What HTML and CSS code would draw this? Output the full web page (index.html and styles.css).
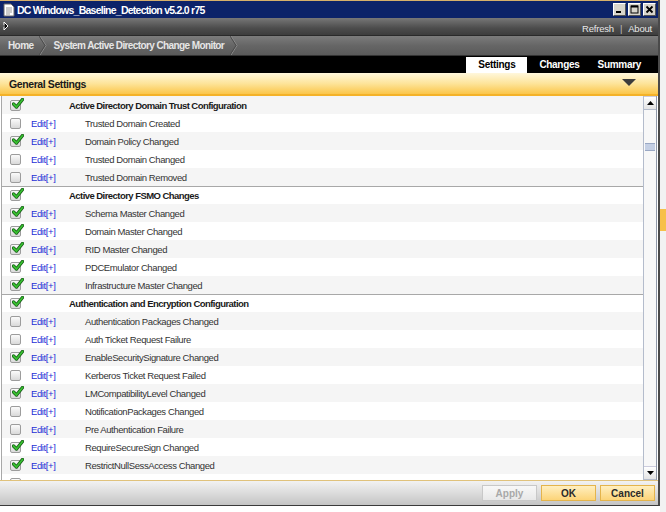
FILE: index.html
```html
<!DOCTYPE html>
<html lang="en">
<head>
    <meta charset="UTF-8">
    <title>DC Windows_Baseline_Detection v5.2.0 r75</title>
    <link rel="stylesheet" href="styles.css">
</head>
<body>
    <div class="screen">
        <div class="window">
            <div class="titlebar">
                <svg class="app-icon" width="12" height="14" viewBox="0 0 12 14">
                    <path d="M1 1 H8 L11 4 V13 H1 Z" fill="#fff" stroke="#666"/>
                    <path d="M3 5 H9 M3 7 H9 M3 9 H9 M3 11 H7" stroke="#999"/>
                </svg>
                <span class="title">DC Windows_Baseline_Detection v5.2.0 r75</span>
                <div class="win-buttons">
                    <span class="win-btn"><svg width="9" height="9"><path d="M1 7 H6" stroke="#000" stroke-width="2"/></svg></span>
                    <span class="win-btn"><svg width="9" height="9"><rect x="1" y="1" width="7" height="7" fill="none" stroke="#000"/><path d="M1 1.5 H8" stroke="#000" stroke-width="2"/></svg></span>
                    <span class="win-btn"><svg width="9" height="9"><path d="M1.5 1.5 L7.5 7.5 M7.5 1.5 L1.5 7.5" stroke="#000" stroke-width="1.8"/></svg></span>
                </div>
            </div>

            <div class="toolbar">
                <svg class="cursor" width="10" height="10" viewBox="0 0 10 10">
                    <path d="M0 5 H5 M4 1 L8 5 L4 9 Z" stroke="#fff" stroke-width="1" fill="#000"/>
                    <path d="M0 5 H5" stroke="#000" stroke-width="1"/>
                </svg>
                <div class="toolbar-links">
                    <a>Refresh</a><span class="sep">|</span><a>About</a>
                </div>
            </div>

            <div class="crumbs">
                <span class="crumb">Home</span>
                <svg class="chev" width="8" height="19" viewBox="0 0 8 19"><path d="M1 0 L7 9.5 L1 19" fill="none" stroke="#8c8c8c"/><path d="M0 0 L6 9.5 L0 19" fill="none" stroke="#4a4a4a"/></svg>
                <span class="crumb">System Active Directory Change Monitor</span>
                <svg class="chev" width="8" height="19" viewBox="0 0 8 19"><path d="M1 0 L7 9.5 L1 19" fill="none" stroke="#8c8c8c"/><path d="M0 0 L6 9.5 L0 19" fill="none" stroke="#4a4a4a"/></svg>
            </div>

            <div class="tabbar">
                <span class="tab active">Settings</span>
                <span class="tab">Changes</span>
                <span class="tab">Summary</span>
            </div>

            <div class="section-head">
                <span>General Settings</span>
                <svg class="collapse" width="14" height="7" viewBox="0 0 14 7"><path d="M0 0 H14 L7 7 Z" fill="#3c3c3c"/></svg>
            </div>

            <div class="content">
                <div class="list">
                    <div class="row group first"><span class="cb on"></span><span class="group-name">Active Directory Domain Trust Configuration</span></div>
                    <div class="row"><span class="cb"></span><a class="edit">Edit[+]</a><span class="label">Trusted Domain Created</span></div>
                    <div class="row"><span class="cb on"></span><a class="edit">Edit[+]</a><span class="label">Domain Policy Changed</span></div>
                    <div class="row"><span class="cb"></span><a class="edit">Edit[+]</a><span class="label">Trusted Domain Changed</span></div>
                    <div class="row"><span class="cb"></span><a class="edit">Edit[+]</a><span class="label">Trusted Domain Removed</span></div>

                    <div class="row group"><span class="cb on"></span><span class="group-name">Active Directory FSMO Changes</span></div>
                    <div class="row"><span class="cb on"></span><a class="edit">Edit[+]</a><span class="label">Schema Master Changed</span></div>
                    <div class="row"><span class="cb on"></span><a class="edit">Edit[+]</a><span class="label">Domain Master Changed</span></div>
                    <div class="row"><span class="cb on"></span><a class="edit">Edit[+]</a><span class="label">RID Master Changed</span></div>
                    <div class="row"><span class="cb on"></span><a class="edit">Edit[+]</a><span class="label">PDCEmulator Changed</span></div>
                    <div class="row"><span class="cb on"></span><a class="edit">Edit[+]</a><span class="label">Infrastructure Master Changed</span></div>

                    <div class="row group"><span class="cb on"></span><span class="group-name">Authentication and Encryption Configuration</span></div>
                    <div class="row"><span class="cb"></span><a class="edit">Edit[+]</a><span class="label">Authentication Packages Changed</span></div>
                    <div class="row"><span class="cb"></span><a class="edit">Edit[+]</a><span class="label">Auth Ticket Request Failure</span></div>
                    <div class="row"><span class="cb on"></span><a class="edit">Edit[+]</a><span class="label">EnableSecuritySignature Changed</span></div>
                    <div class="row"><span class="cb"></span><a class="edit">Edit[+]</a><span class="label">Kerberos Ticket Request Failed</span></div>
                    <div class="row"><span class="cb on"></span><a class="edit">Edit[+]</a><span class="label">LMCompatibilityLevel Changed</span></div>
                    <div class="row"><span class="cb"></span><a class="edit">Edit[+]</a><span class="label">NotificationPackages Changed</span></div>
                    <div class="row"><span class="cb"></span><a class="edit">Edit[+]</a><span class="label">Pre Authentication Failure</span></div>
                    <div class="row"><span class="cb on"></span><a class="edit">Edit[+]</a><span class="label">RequireSecureSign Changed</span></div>
                    <div class="row"><span class="cb on"></span><a class="edit">Edit[+]</a><span class="label">RestrictNullSessAccess Changed</span></div>
                    <div class="row"><span class="cb"></span></div>
                </div>
                <div class="scrollbar">
                    <span class="sb-btn"><svg width="7" height="4"><path d="M0 4 H7 L3.5 0 Z" fill="#000"/></svg></span>
                    <div class="sb-track"><span class="sb-thumb"></span></div>
                    <span class="sb-btn"><svg width="7" height="4"><path d="M0 0 H7 L3.5 4 Z" fill="#000"/></svg></span>
                </div>
            </div>

            <div class="footer">
                <button class="btn disabled">Apply</button>
                <button class="btn">OK</button>
                <button class="btn">Cancel</button>
            </div>
        </div>
        <div class="outside">
            <div class="outside-tab"></div>
        </div>
    </div>
</body>
</html>
```

FILE: styles.css
```css
body {
    margin: 0;
    background: #fff;
    font-family: "Liberation Sans", Arial, sans-serif;
    font-size: 9.5px;
    color: #222;
}
.screen {
    display: flex;
    width: 666px;
    height: 512px;
    overflow: hidden;
}
.window {
    width: 660px;
    height: 506px;
    display: flex;
    flex-direction: column;
    border-right: 2px solid #4a4a4a;
    border-bottom: 1px solid #3a3a3a;
    box-sizing: border-box;
    background: #fff;
}
.outside {
    flex: 1;
    background: #f2f2f2;
    padding-top: 209px;
}
.outside-tab {
    height: 22px;
    background: #f7c04a;
}

/* title bar */
.titlebar {
    height: 18px;
    display: flex;
    align-items: center;
    background: #0c2369;
    border-top: 1px solid #d6b06a;
    box-sizing: border-box;
    padding-left: 3px;
}
.app-icon {
    flex: none;
}
.title {
    margin-left: 2px;
    color: #fff;
    font-weight: bold;
    font-size: 10.5px;
    letter-spacing: -0.75px;
}
.win-buttons {
    margin-left: auto;
    margin-right: 2px;
    display: flex;
    gap: 2px;
}
.win-btn {
    width: 11px;
    height: 11px;
    background: #d8d5cc;
    border: 1px solid #fff;
    border-right-color: #555;
    border-bottom-color: #555;
    display: flex;
    align-items: center;
    justify-content: center;
}

/* toolbar */
.toolbar {
    height: 17px;
    display: flex;
    align-items: center;
    background: linear-gradient(#777, #4c4c4c 60%, #3d3d3d);
    border-bottom: 1px solid #2a2a2a;
}
.cursor {
    margin-top: -2px;
}
.toolbar-links {
    margin-left: auto;
    margin-right: 6px;
    color: #e8e8e8;
    font-size: 9.5px;
    letter-spacing: -0.2px;
    padding-top: 3px;
}
.toolbar-links .sep {
    margin: 0 6px;
    color: #bbb;
}

/* breadcrumbs */
.crumbs {
    height: 19px;
    display: flex;
    align-items: center;
    background: linear-gradient(#7c7c7c, #666 50%, #5a5a5a);
    border-bottom: 1px solid #333;
}
.crumb {
    color: #e6e6e6;
    font-weight: bold;
    font-size: 10px;
    letter-spacing: -0.6px;
    padding: 0 6px 0 8px;
}
.crumb + .chev + .crumb {
    padding-left: 6px;
}
.chev {
    flex: none;
}

/* tabs */
.tabbar {
    height: 17px;
    background: #000;
    display: flex;
    justify-content: flex-end;
    align-items: flex-end;
    padding-right: 8px;
}
.tab {
    color: #fff;
    font-weight: bold;
    font-size: 10px;
    letter-spacing: -0.3px;
    padding: 0 9px 3px;
}
.tab.active {
    background: #fff;
    color: #000;
    width: 61px;
    box-sizing: border-box;
    text-align: center;
    padding-top: 2px;
    margin-right: 3px;
}

/* section header */
.section-head {
    height: 23px;
    display: flex;
    align-items: center;
    padding: 1px 22px 0 9px;
    box-sizing: border-box;
    background: linear-gradient(#fff7dc, #fde49a 50%, #fbc64a);
    border-bottom: 2px solid #f4b228;
    font-weight: bold;
    font-size: 10.5px;
    letter-spacing: -0.4px;
    color: #1a1a1a;
}
.collapse {
    margin-left: auto;
    margin-top: -3px;
}

/* list */
.content {
    display: flex;
    height: 384px;
    overflow: hidden;
}
.list {
    flex: 1;
    border-left: 1px solid #a8a8a8;
    margin-left: 1px;
}
.row {
    height: 18px;
    display: flex;
    align-items: center;
    background: #fff;
    box-sizing: border-box;
    letter-spacing: -0.4px;
}
.row:nth-child(odd) {
    background: #f5f5f5;
}
.row.group {
    border-top: 1px solid #a8a8a8;
}
.row.group.first {
    border-top: none;
}
.cb {
    position: relative;
    width: 11px;
    height: 11px;
    margin-left: 8px;
    box-sizing: border-box;
    border: 1px solid #9c9c9c;
    border-radius: 2px;
    background: linear-gradient(#fbfbfb, #d9d9d9);
    flex: none;
}
.cb.on::after {
    content: "";
    position: absolute;
    left: 1px;
    top: -3px;
    width: 12px;
    height: 11px;
    background: url("data:image/svg+xml,%3Csvg xmlns='http://www.w3.org/2000/svg' width='12' height='11'%3E%3Cpath d='M1.5 6 L4.5 9 L10.5 1.5' fill='none' stroke='%23185c18' stroke-width='3.4' stroke-linecap='round' stroke-linejoin='round'/%3E%3Cpath d='M1.5 6 L4.5 9 L10.5 1.5' fill='none' stroke='%2338c030' stroke-width='1.8' stroke-linecap='round' stroke-linejoin='round'/%3E%3C/svg%3E") no-repeat;
}
.edit {
    color: #1f2fd6;
    margin-left: 10px;
    width: 54px;
}
.label {
    color: #333;
}
.group-name {
    margin-left: 48px;
    font-weight: bold;
    color: #1a1a1a;
    letter-spacing: -0.55px;
}

/* scrollbar */
.scrollbar {
    width: 12px;
    display: flex;
    flex-direction: column;
    background: #fff;
    border-left: 1px solid #b4bccc;
    border-right: 1px solid #8f98a8;
    margin-right: 1px;
}
.sb-btn {
    height: 12px;
    display: flex;
    align-items: center;
    justify-content: center;
    background: linear-gradient(#fff, #e4e4e4);
    border-top: 1px solid #ccd;
    border-bottom: 1px solid #b4bccc;
}
.sb-track {
    flex: 1;
    background: #f8f8f8;
    padding-top: 33px;
}
.sb-thumb {
    display: block;
    height: 6px;
    margin: 0 1px;
    background: #c4cfe4;
    border-top: 1px solid #9aa8c4;
    border-bottom: 1px solid #9aa8c4;
}

/* footer */
.footer {
    flex: 1;
    display: flex;
    justify-content: flex-end;
    align-items: center;
    gap: 4px;
    padding-right: 3px;
    background: linear-gradient(#f2f2f2, #dcdcdc 50%, #c4c4c4);
    border-top: 1px solid #e0c27c;
}
.btn {
    width: 55px;
    height: 16px;
    margin: 0;
    padding: 0;
    font-family: "Liberation Sans", Arial, sans-serif;
    font-size: 10px;
    font-weight: bold;
    color: #2a2a2a;
    border: 1px solid #e4b44c;
    background: linear-gradient(#ffefc0, #fcd478);
}
.btn.disabled {
    color: #a8a8a8;
    border-color: #c8c8c8;
    background: linear-gradient(#f8f8f8, #e8e8e8);
}
```
